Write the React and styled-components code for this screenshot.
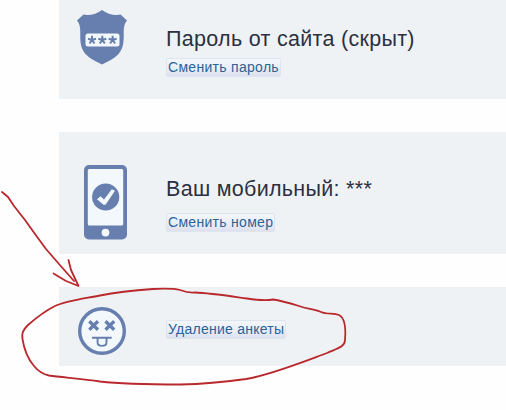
import React from 'react';
import styled, { createGlobalStyle } from 'styled-components';

const GlobalStyle = createGlobalStyle`
  body {
    margin: 0;
    background: #fefefe;
    font-family: "Liberation Sans", Arial, sans-serif;
    overflow: hidden;
  }`;

const Page = styled.main`
  position: relative;
  box-sizing: border-box;
  width: 506px;
  height: 410px;
  padding-left: 59px;
  overflow: hidden;`;

const List = styled.div`
  display: flex;
  flex-direction: column;
  gap: 33px;`;

const Card = styled.section`
  display: grid;
  grid-template-columns: 107px 1fr;
  height: ${props => props.$height}px;
  background: #eff2f4;`;

const IconCell = styled.div`
  padding: ${props => props.$top}px 0 0 ${props => props.$left}px;
  svg { display: block; }`;

const Info = styled.div`
  display: flex;
  flex-direction: column;
  align-items: flex-start;
  padding-top: ${props => props.$top}px;`;

const Title = styled.h2`
  margin: 0 0 ${props => props.$gap}px;
  font-size: 21.5px;
  font-weight: 400;
  line-height: 24px;
  letter-spacing: 0.3px;
  white-space: nowrap;
  color: #2b3042;`;

const Action = styled.a`
  box-sizing: border-box;
  height: 19px;
  padding: 0 1px;
  border: 1px solid #dfe5ed;
  border-radius: 2px;
  background: linear-gradient(#f3f7fb, #e8edf6 60%, #dde1ef);
  font-size: 14px;
  line-height: 17px;
  letter-spacing: ${props => props.$spacing}px;
  white-space: nowrap;
  color: #2a6498;`;

const Marks = styled.svg`
  position: absolute;
  top: 0;
  left: 0;
  pointer-events: none;`;

const blue = '#677fae';
const light = '#f3f8fc';

const ShieldIcon = () => (
  <svg width="50" height="55" viewBox="0 0 50 55">
    <path fill={blue} d="M25 0C20 4 12 6 6.500 4.500L0 10.500C2.500 13 3.300 17 3.300 23C3 33 4 39 9 44.500C13 49 19 51.500 25 54.500C31 51.500 37 49 41 44.500C46 39 47 33 46.700 23C46.700 17 47.500 13 50 10.500L43.500 4.500C38 6 30 4 25 0Z" />
    <rect x="8.500" y="23.500" width="34" height="13" rx="2.500" fill={light} />
    <path stroke={blue} strokeWidth="2" fill="none" d="M15 30V25.800M15 30L11 28.700M15 30L19 28.700M15 30L12.500 33.500M15 30L17.500 33.500M25.300 30V25.800M25.300 30L21.300 28.700M25.300 30L29.300 28.700M25.300 30L22.800 33.500M25.300 30L27.800 33.500M35.600 30V25.800M35.600 30L31.600 28.700M35.600 30L39.600 28.700M35.600 30L33.100 33.500M35.600 30L38.100 33.500" />
  </svg>
);

const PhoneIcon = () => (
  <svg width="43" height="75" viewBox="0 0 43 75">
    <rect width="43" height="74.500" rx="5" fill={blue} />
    <rect x="3.800" y="4" width="35.400" height="56.500" rx="1.500" fill={light} />
    <circle cx="21.700" cy="32" r="13.600" fill={blue} />
    <path fill={light} d="M13 34.300L16.500 31.200L20 34.500L27.800 24.300L31 25.800L21.500 39.800H19.500Z" />
    <circle cx="21.500" cy="67.600" r="3.900" fill={light} />
  </svg>
);

const FaceIcon = () => (
  <svg width="48" height="48" viewBox="0 0 48 48" fill="none" stroke={blue}>
    <circle cx="24" cy="24" r="22.300" strokeWidth="3.400" fill={light} />
    <path strokeWidth="3.300" d="M11.300 14.300L20 22.700M20 14.300L11.300 22.700M27.500 14.300L36.200 22.700M36.200 14.300L27.500 22.700" />
    <path strokeWidth="1.900" d="M14 30.700H33.700M19.600 31V35.500Q19.600 38.900 24 38.900Q28.500 38.900 28.500 35.500V31" />
  </svg>
);

class App extends React.Component {
  render() {
    return (
      <Page>
        <GlobalStyle />
        <List>
          <Card $height={99}>
            <IconCell $top={10} $left={18}><ShieldIcon /></IconCell>
            <Info $top={27}>
              <Title $gap={7}>Пароль от сайта (скрыт)</Title>
              <Action $spacing={0.3}>Сменить пароль</Action>
            </Info>
          </Card>
          <Card $height={122}>
            <IconCell $top={33} $left={25}><PhoneIcon /></IconCell>
            <Info $top={45}>
              <Title $gap={12}>Ваш мобильный: ***</Title>
              <Action $spacing={0.3}>Сменить номер</Action>
            </Info>
          </Card>
          <Card $height={79}>
            <IconCell $top={20} $left={19}><FaceIcon /></IconCell>
            <Info $top={33}>
              <Action $spacing={0.25}>Удаление анкеты</Action>
            </Info>
          </Card>
        </List>
        {/* hand-drawn arrow and loop around the last row */}
        <Marks width="506" height="410" viewBox="0 0 506 410" fill="none" stroke="#b9282c" strokeWidth="1.8" strokeLinecap="round" strokeLinejoin="round">
          <path d="M2 192L8 197L14 206L25 220L35 234L46 249L59 264L74 281M68.500 260L71 270L78.500 286L66 281L53.500 273.500" />
          <path d="M180 290C174 288.500 164 288.500 153 289C132 290.500 115 292.500 100 295.500C82 299 66 301 55 306C45 311 36 318 28 325C23 330 21.500 333 22.500 339C24 349 28 359 34 366C38 371 42 374 49 375.500C62 377.500 82 378.500 100 381.500C125 384.500 152 384.500 180 384.500C205 384 225 382 246 379C270 375 300 363 327 353C337 348.500 345 347 345 340C346 328 345 318 339 315C334 313 327 314.500 321 312C314 309 307 309 299 306C289 303 280 300.500 273 299.500C267 300.500 257 300 247 298.500C229 296 210 293 195 292.500C188 293 184 291.500 180 290Z" />
        </Marks>
      </Page>
    );
  }
}
export default App;
